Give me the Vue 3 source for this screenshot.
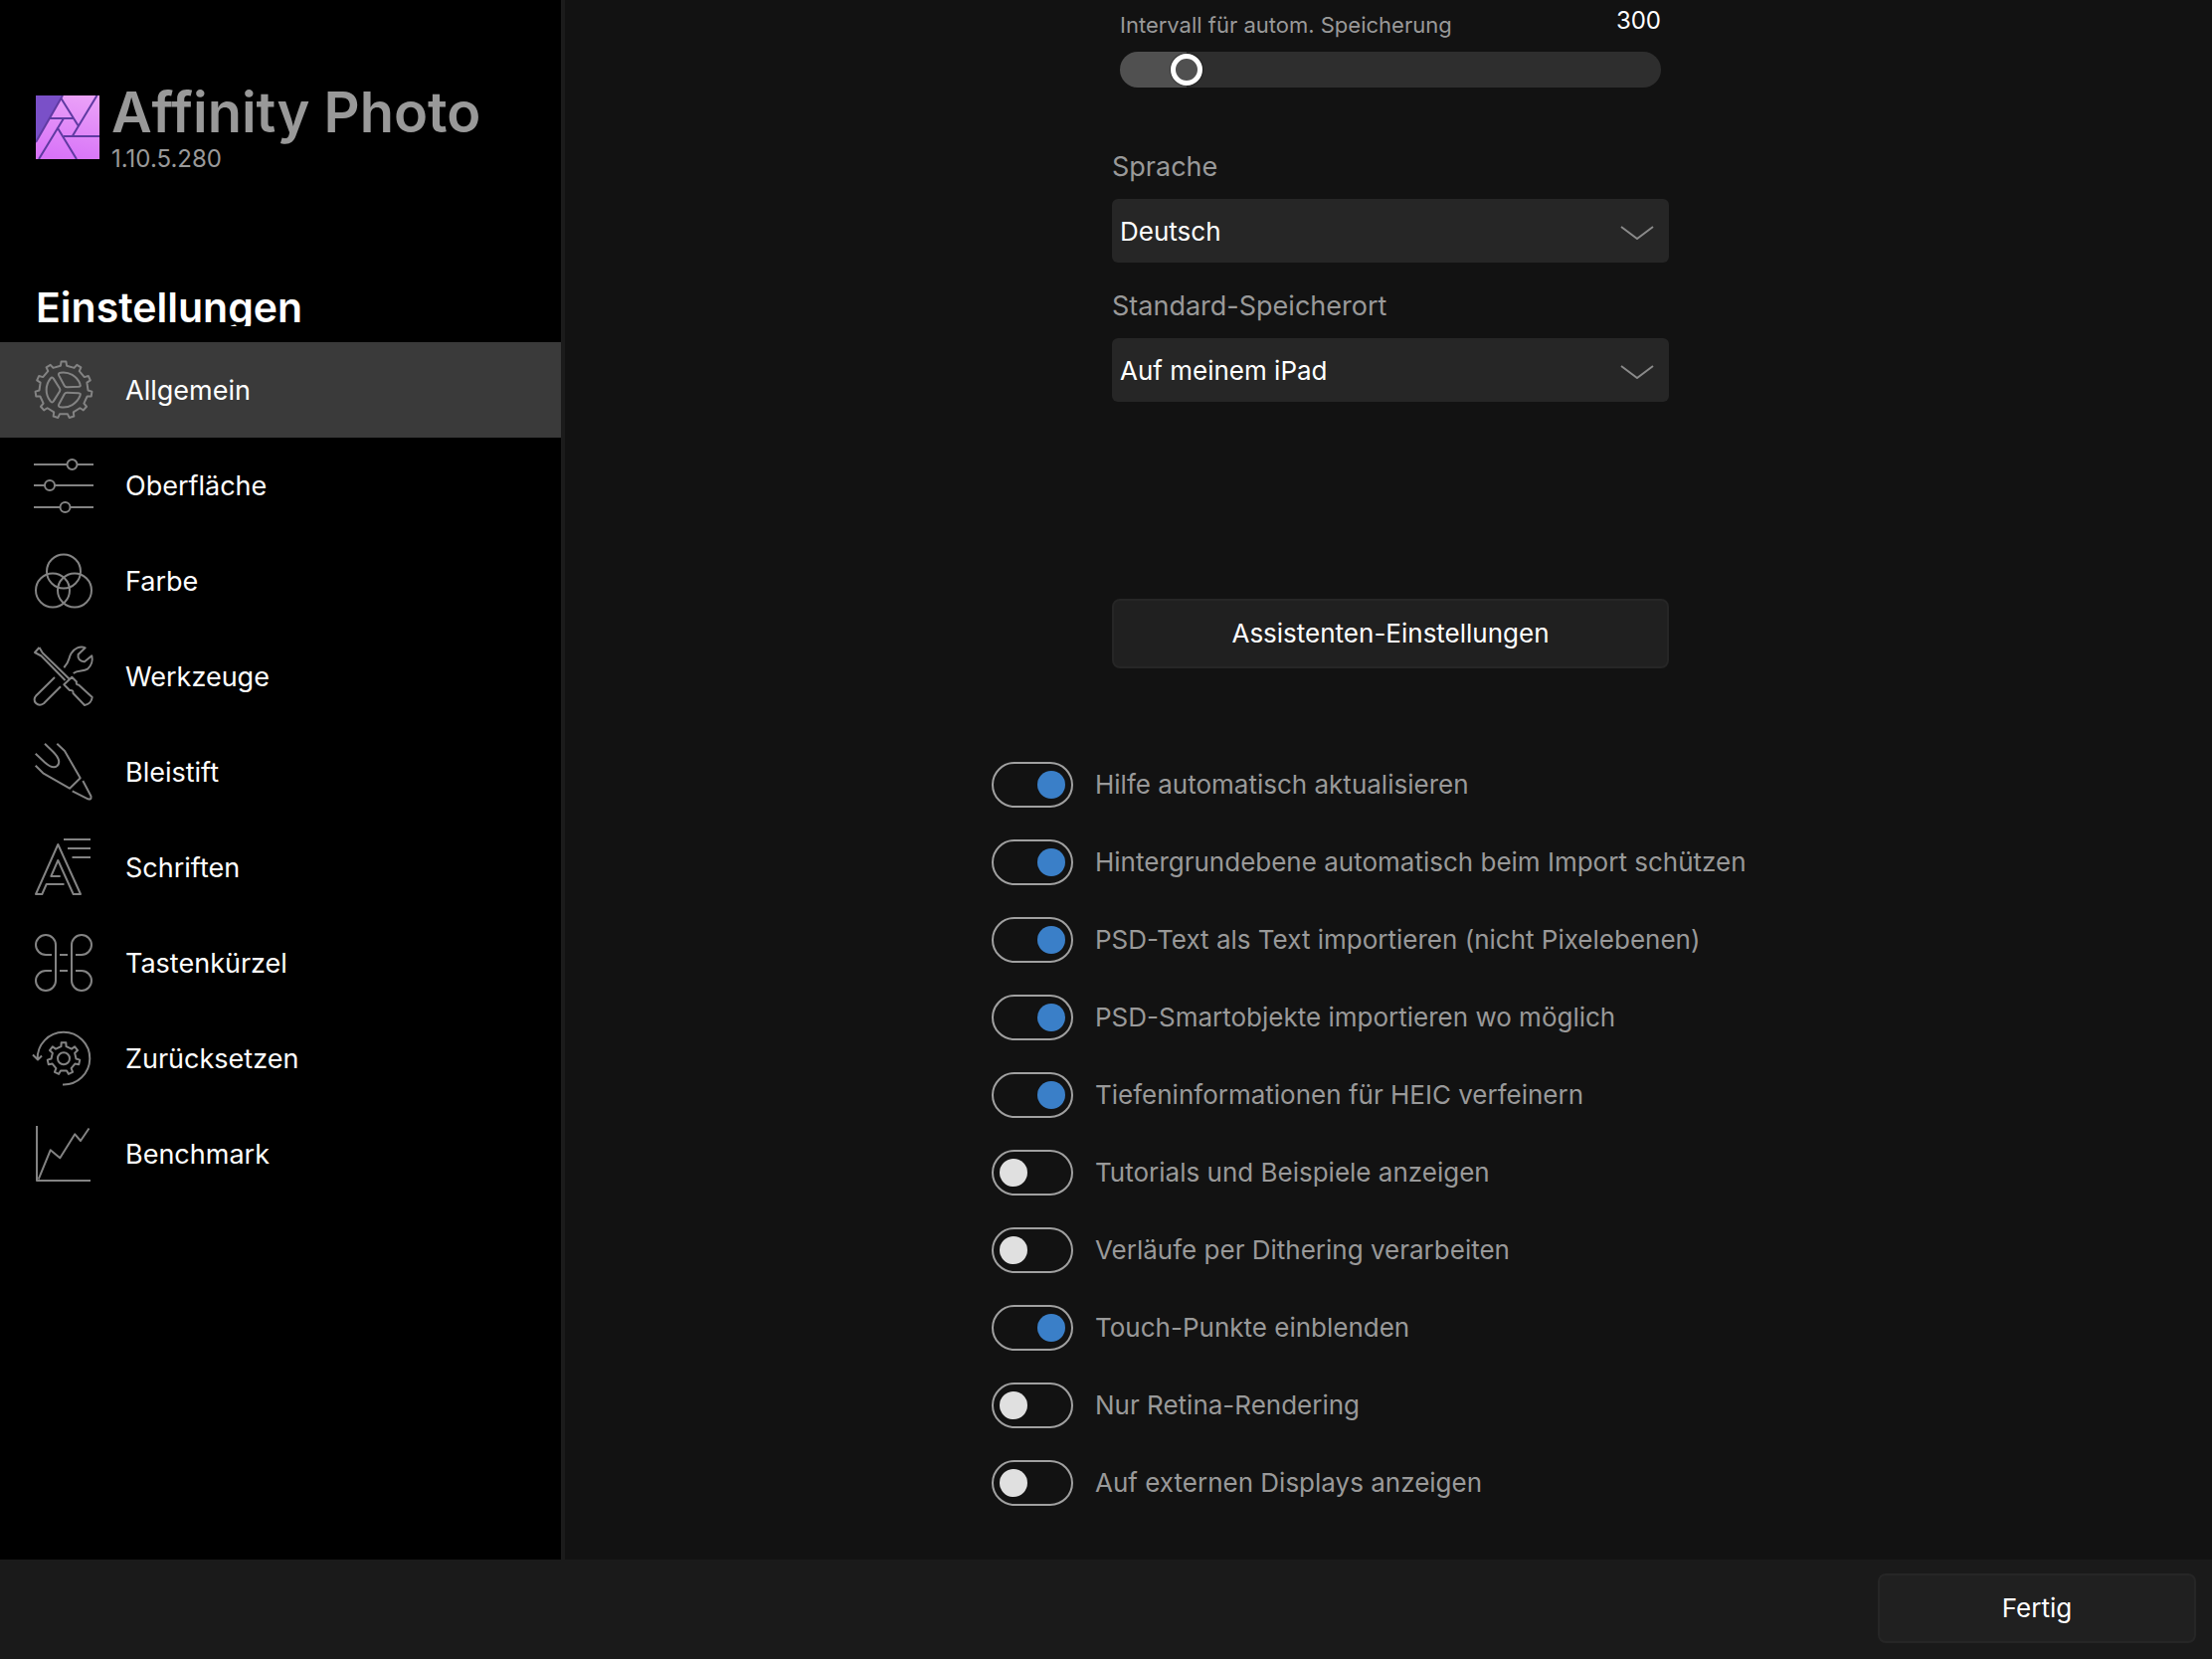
<template>
  <div class="app">
    <aside class="sidebar">
      <header class="brand">
        <svg class="logo" viewBox="0 0 64 64" aria-hidden="true">
          <defs>
            <linearGradient id="logoPink" x1="0.6" y1="0" x2="0.4" y2="1">
              <stop offset="0" stop-color="#eaa0f8" />
              <stop offset="1" stop-color="#d873f8" />
            </linearGradient>
          </defs>
          <rect width="64" height="64" fill="url(#logoPink)" />
          <path d="M0 0H27L0 47Z" fill="#7a50c8" />
          <path
            d="M27 0L0 47M25.5 3L43 31M61.5 0L37 40.5M14 23H38M28 23L3 64M21.5 32L41 64M28 41H64"
            fill="none"
            stroke="#5f3aa2"
            stroke-width="2"
          />
        </svg>
        <div class="brandText">
          <h1 class="appName">Affinity Photo</h1>
          <div class="version">1.10.5.280</div>
        </div>
      </header>

      <h2 class="heading">Einstellungen</h2>

      <nav class="nav">
        <button
          v-for="item in sections"
          :key="item.id"
          type="button"
          class="navItem"
          :class="{ active: item.id === selectedSection }"
          @click="selectedSection = item.id"
        >
          <svg class="icon" viewBox="0 0 60 60" aria-hidden="true">
            <path v-for="(d, idx) in item.paths" :key="idx" :d="d" />
            <template v-if="item.id === 'general'">
              <path
                v-for="angle in [0, 120, 240]"
                :key="angle"
                :d="spoke"
                :transform="`rotate(${angle} 30 30)`"
              />
            </template>
          </svg>
          <span>{{ item.label }}</span>
        </button>
      </nav>
    </aside>

    <main class="content">
      <div class="fields">
        <div class="sliderField">
          <div class="sliderTop">
            <label for="interval" class="sliderLabel">Intervall für autom. Speicherung</label>
            <output for="interval" class="sliderValue">{{ interval }}</output>
          </div>
          <input
            id="interval"
            v-model.number="interval"
            class="slider"
            type="range"
            min="0"
            :max="maxInterval"
            :style="{ '--fill': fill }"
          />
        </div>

        <div v-for="field in selects" :key="field.id" class="field">
          <label class="fieldLabel" :for="field.id">{{ field.label }}</label>
          <div class="selectWrap">
            <select :id="field.id" v-model="field.value" class="select">
              <option v-for="option in field.options" :key="option">{{ option }}</option>
            </select>
            <svg class="chevron" viewBox="0 0 34 14" aria-hidden="true">
              <path d="M1 1L17 13L33 1" />
            </svg>
          </div>
        </div>

        <button type="button" class="btn assistant">Assistenten-Einstellungen</button>
      </div>

      <div class="toggles">
        <label v-for="toggle in toggles" :key="toggle.label" class="toggle">
          <input v-model="toggle.on" type="checkbox" class="switch" />
          <span>{{ toggle.label }}</span>
        </label>
      </div>
    </main>

    <footer class="footer">
      <button type="button" class="btn done">Fertig</button>
    </footer>
  </div>
</template>

<script setup>
import { computed, ref } from 'vue'

const maxInterval = 3000
const interval = ref(300)
const selectedSection = ref('general')

// keeps the filled part of the track ending under the middle of the thumb
const fill = computed(() => {
  const ratio = interval.value / maxInterval
  return `calc(16px + (100% - 32px) * ${ratio})`
})

function circle(cx, cy, r) {
  return `M${cx - r} ${cy}a${r} ${r} 0 1 0 ${2 * r} 0a${r} ${r} 0 1 0 ${-2 * r} 0Z`
}

function gear(cx, cy, teeth, outer, inner, tip, base) {
  const step = (Math.PI * 2) / teeth
  const points = []
  for (let i = 0; i < teeth; i++) {
    const corners = [
      [inner, -base],
      [outer, -tip],
      [outer, tip],
      [inner, base],
    ]
    for (const [r, offset] of corners) {
      const a = (i + offset) * step
      points.push(`${(cx + r * Math.sin(a)).toFixed(2)} ${(cy - r * Math.cos(a)).toFixed(2)}`)
    }
  }
  return `M${points.join('L')}Z`
}

const spoke =
  'M16.8 18.5Q18.3 16.5 19.8 18.6L26 28.5Q26.9 30 26 31.5L19.8 41.4Q18.3 43.5 16.8 41.5A18 18 0 0 1 16.8 18.5Z'

const sections = [
  { id: 'general', label: 'Allgemein', paths: [gear(30, 30, 11, 28.5, 24.5, 0.15, 0.22)] },
  {
    id: 'interface',
    label: 'Oberfläche',
    paths: [
      'M0 9H33.5M43.5 9H60M0 30H11M21 30H60M0 52H26.5M36.5 52H60',
      circle(38.5, 9, 5),
      circle(16, 30, 5),
      circle(31.5, 52, 5),
    ],
  },
  {
    id: 'color',
    label: 'Farbe',
    paths: [circle(30, 20.5, 17), circle(19, 39.5, 17), circle(41, 39.5, 17)],
  },
  {
    id: 'tools',
    label: 'Werkzeuge',
    paths: [
      'M5.5 1L1 6L7.5 9.5L31.5 34M5.5 1L8.8 6.5L35.5 32.5',
      'M30.3 38.3L38.3 30.7L43 35.5Q42 38.5 45 38.5L58.7 51Q58 57.5 51 59L39.5 47Q40 43.5 36 44Z',
      'M30.3 21.3C36.5 15 34.5 12 37.5 7C40.5 2 46.5 -1 51.7 1.3L44.6 8C43.8 12 46.5 15.5 51 15.3L58.3 9.3C59.5 14 58 19.5 54 22.7C49.5 25.5 44.5 23.5 39.7 27',
      'M21 31L2.5 49.2C-2.5 55 4 61.5 10 57.3L27 40.3',
    ],
  },
  {
    id: 'pencil',
    label: 'Bleistift',
    paths: [
      'M1.7 11.7L11 20.5C16 25 20 27 23.5 24C27 20.5 24.5 15 19.3 9.7L11 1.7',
      'M23.3 1.7L31 9L46.7 36.3L36 46.7L9.3 31.3L1.7 23.7',
      'M49.3 39L57.5 54.5Q58 58.5 54.5 57.3L38.7 49.3',
    ],
  },
  {
    id: 'fonts',
    label: 'Schriften',
    paths: [
      'M30 2H57M34 11H57M38.5 20H57',
      'M30.5 47H12.7L8.3 57H2L24.3 7L47 57H39.7L24.3 23L17.3 39H26.7',
    ],
  },
  {
    id: 'shortcuts',
    label: 'Tastenkürzel',
    paths: [
      'M18 22H12A10 10 0 1 1 22 12V48A10 10 0 1 1 12 38H18',
      'M42 22H48A10 10 0 1 0 38 12V48A10 10 0 1 0 48 38H42',
      'M26 22H34M26 38H34',
    ],
  },
  {
    id: 'reset',
    label: 'Zurücksetzen',
    paths: [
      'M3.7 31A26.3 26.3 0 1 1 29 56.4M-1 26.5L4 31.5L8 27.5',
      gear(30, 30.3, 7, 16.3, 12.5, 0.16, 0.23),
      circle(30, 30.3, 6),
    ],
  },
  {
    id: 'benchmark',
    label: 'Benchmark',
    paths: ['M3 2V57H57', 'M4.7 55.7L16.7 26.3L26.3 34.3L41.3 10.3L47 17L55.5 4.5'],
  },
]

const selects = ref([
  {
    id: 'language',
    label: 'Sprache',
    value: 'Deutsch',
    options: ['Deutsch'],
  },
  {
    id: 'location',
    label: 'Standard-Speicherort',
    value: 'Auf meinem iPad',
    options: ['Auf meinem iPad'],
  },
])

const toggles = ref([
  { label: 'Hilfe automatisch aktualisieren', on: true },
  { label: 'Hintergrundebene automatisch beim Import schützen', on: true },
  { label: 'PSD-Text als Text importieren (nicht Pixelebenen)', on: true },
  { label: 'PSD-Smartobjekte importieren wo möglich', on: true },
  { label: 'Tiefeninformationen für HEIC verfeinern', on: true },
  { label: 'Tutorials und Beispiele anzeigen', on: false },
  { label: 'Verläufe per Dithering verarbeiten', on: false },
  { label: 'Touch-Punkte einblenden', on: true },
  { label: 'Nur Retina-Rendering', on: false },
  { label: 'Auf externen Displays anzeigen', on: false },
])
</script>

<style>
body {
  margin: 0;
  background: #121212;
}
</style>

<style scoped>
.app {
  display: grid;
  grid-template-columns: 568px 1fr;
  grid-template-rows: 1fr auto;
  min-height: 100vh;
  font-family: Inter, 'Liberation Sans', sans-serif;
  font-size: 26px;
  color: #fff;
}

button,
select {
  font: inherit;
  color: inherit;
}

.sidebar {
  background: #000;
  border-right: 4px solid #1b1b1b;
}

.brand {
  display: flex;
  gap: 12px;
  padding: 80px 36px 0;
}

.logo {
  flex: none;
  width: 64px;
  height: 64px;
  margin-top: 16px;
}

.appName {
  margin: 0;
  font-size: 56px;
  font-weight: 600;
  line-height: 66px;
  white-space: nowrap;
  color: #999;
}

.version {
  font-size: 24px;
  line-height: 28px;
  color: #999;
}

.heading {
  height: 40px;
  margin: 114px 36px 16px;
  overflow: hidden;
  font-size: 41px;
  font-weight: 600;
  line-height: 42px;
}

.nav {
  display: flex;
  flex-direction: column;
}

.navItem {
  display: flex;
  align-items: center;
  gap: 32px;
  height: 96px;
  padding: 0 34px;
  border: 0;
  background: none;
  text-align: left;
  font-size: 27px;
  cursor: pointer;
}

.navItem.active {
  background: #3a3a3a;
}

.icon {
  width: 60px;
  height: 60px;
  overflow: visible;
  fill: none;
  stroke: #838383;
  stroke-width: 2;
  stroke-linejoin: round;
}

.content {
  display: flex;
  flex-direction: column;
  align-items: center;
  padding: 0 0 38px 4px;
}

.fields {
  display: flex;
  flex-direction: column;
  width: 560px;
}

.sliderField {
  padding: 0 8px;
  margin-bottom: 52px;
}

.sliderTop {
  display: flex;
  justify-content: space-between;
  height: 52px;
}

.sliderLabel {
  padding-top: 10px;
  font-size: 22px;
  line-height: 30px;
  color: #999;
}

.sliderValue {
  padding-top: 6px;
  font-size: 24px;
  line-height: 30px;
}

.slider {
  display: block;
  appearance: none;
  width: 100%;
  height: 36px;
  margin: 0;
  border-radius: 18px;
  background: linear-gradient(to right, #505050 var(--fill), #2e2e2e var(--fill));
}

.slider::-webkit-slider-thumb {
  appearance: none;
  box-sizing: border-box;
  width: 32px;
  height: 32px;
  border: 5px solid #fff;
  border-radius: 50%;
  background: #505050;
  box-shadow: 0 0 1px 1px rgba(0, 0, 0, 0.3);
}

.field {
  display: flex;
  flex-direction: column;
  gap: 14px;
  margin-bottom: 16px;
}

.fieldLabel {
  padding-top: 10px;
  line-height: 36px;
  font-size: 27px;
  color: #999;
}

.selectWrap {
  position: relative;
}

.select {
  display: block;
  appearance: none;
  width: 100%;
  height: 64px;
  padding: 0 60px 0 8px;
  border: 0;
  border-radius: 6px;
  background: #262626;
}

.chevron {
  position: absolute;
  top: 27px;
  right: 15px;
  width: 34px;
  height: 14px;
  fill: none;
  stroke: #8a8a8a;
  stroke-width: 2;
  pointer-events: none;
}

.btn {
  height: 70px;
  padding: 0 8px 2px;
  border: 2px solid #262626;
  border-radius: 8px;
  background: #202020;
  cursor: pointer;
}

.assistant {
  margin-top: 182px;
}

.toggles {
  display: flex;
  flex-direction: column;
  gap: 32px;
  width: 802px;
  margin-top: 94px;
}

.toggle {
  display: flex;
  align-items: center;
  gap: 22px;
  line-height: 46px;
  color: #999;
}

.switch {
  appearance: none;
  display: flex;
  align-items: center;
  box-sizing: border-box;
  width: 82px;
  height: 46px;
  margin: 0;
  padding: 0 6px;
  border: 2px solid #a0a0a0;
  border-radius: 23px;
}

.switch::before {
  content: '';
  width: 28px;
  height: 28px;
  border-radius: 50%;
  background: #e0e0e0;
}

.switch:checked::before {
  margin-left: auto;
  background: #3a7fc8;
}

.footer {
  grid-column: 1 / -1;
  display: flex;
  justify-content: flex-end;
  padding: 14px 16px 16px;
  background: #1a1a1a;
}

.done {
  width: 320px;
}
</style>
